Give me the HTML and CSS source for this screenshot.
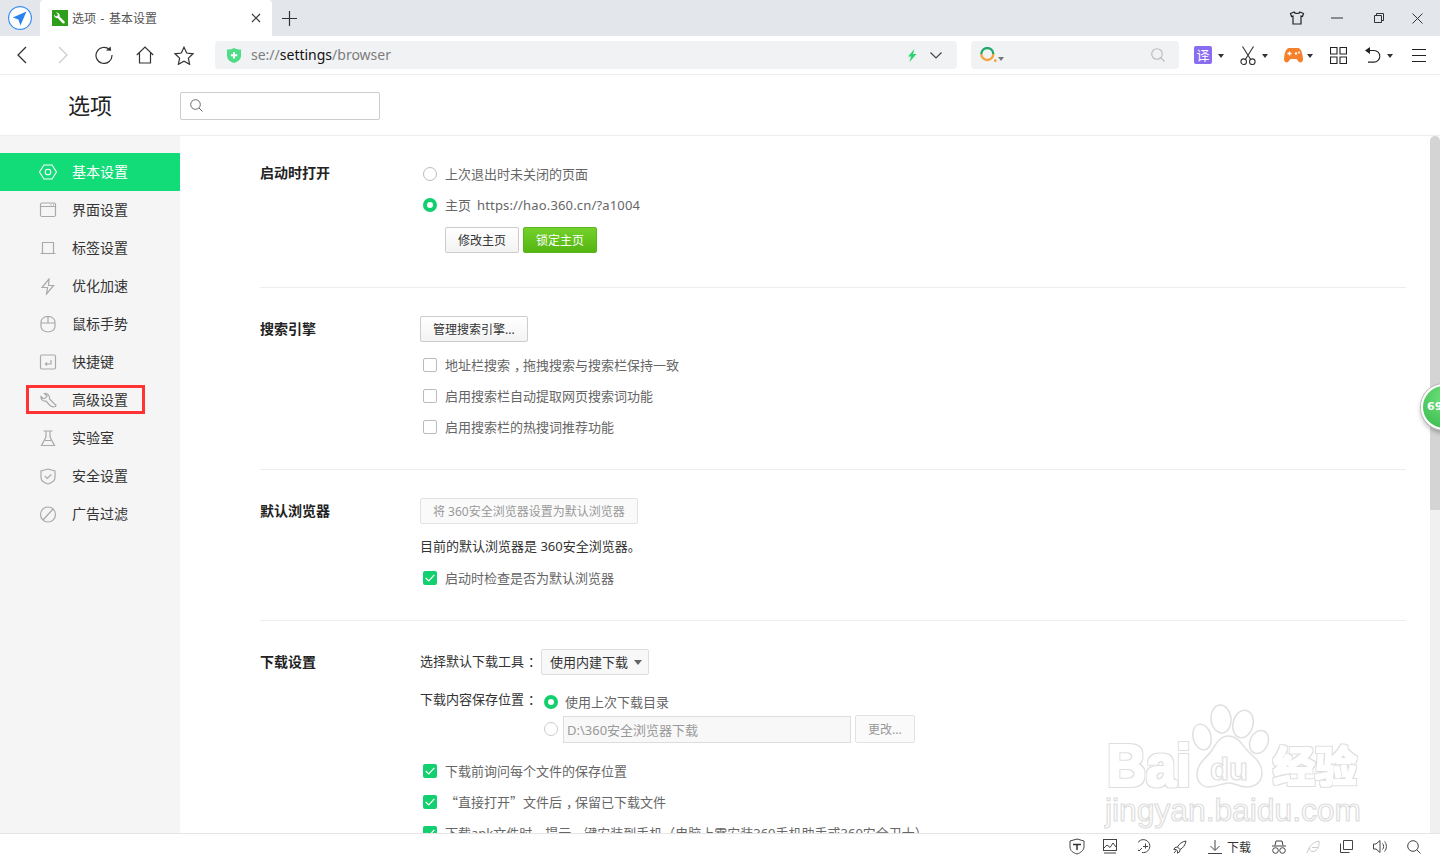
FILE: index.html
```html
<!DOCTYPE html>
<html>
<head>
  <meta charset="utf-8">
  <title>选项 - 基本设置</title>
  <link rel="stylesheet" href="styles.css">
</head>
<body>
  <div class="tabbar">
    <div class="app-logo">
      <svg width="24" height="24" viewBox="0 0 24 24"><circle cx="12" cy="12" r="11.4" fill="#fff" stroke="#3d8ff2" stroke-width="1.2"/><path d="M18.5 5.5L4.8 11.6l5.6 2 2 5.8z" fill="#2c82ee"/></svg>
    </div>
    <div class="tab">
      <svg class="favicon" width="16" height="16" viewBox="0 0 16 16"><rect width="16" height="16" fill="#2f9e1b"/><path d="M4 2.6l2 2-.8 1.4-1.5.4-1.6-1.8c-.3 2.300 1.300 4 3.600 3.500l4.700 5c.6.600 1.500.600 2 .1s.5-1.400-.1-2L7.700 6.800C8.200 4.300 6.300 2.300 4 2.600z" fill="#fff"/></svg>
      <span class="tab-title">选项 - 基本设置</span>
      <svg class="tab-close" width="10" height="10" viewBox="0 0 10 10"><path d="M1 1l8 8M9 1l-8 8" stroke="#333" stroke-width="1.100"/></svg>
    </div>
    <svg class="new-tab" width="15" height="15" viewBox="0 0 15 15"><path d="M7.500 0v15M0 7.500h15" stroke="#333" stroke-width="1.200"/></svg>
    <div class="win-btns">
      <span class="win-btn"><svg width="16" height="16" viewBox="0 0 16 16"><path d="M5 2L1.500 3.500l1 3L4 6v8h8V6l1.500.5 1-3L11 2c-.5 2-5.500 2-6 0z" fill="none" stroke="#222" stroke-width="1.200"/></svg></span>
      <span class="win-btn"><svg width="12" height="2" viewBox="0 0 12 2"><path d="M0 1h12" stroke="#333" stroke-width="1"/></svg></span>
      <span class="win-btn win-restore"><svg width="10" height="10" viewBox="0 0 10 10"><path d="M.5 2.500h7v7h-7zM2.500 2.500v-2h7v7h-2" fill="none" stroke="#333"/></svg></span>
      <span class="win-btn"><svg width="11" height="11" viewBox="0 0 11 11"><path d="M.5.500l10 10M10.500.500l-10 10" stroke="#333" stroke-width="1"/></svg></span>
    </div>
  </div>

  <div class="toolbar">
    <div class="nav-btns">
      <span class="nav-btn"><svg width="10" height="18" viewBox="0 0 10 18"><path d="M9 1L1 9l8 8" fill="none" stroke="#333" stroke-width="1.300"/></svg></span>
      <span class="nav-btn"><svg width="10" height="18" viewBox="0 0 10 18"><path d="M1 1l8 8-8 8" fill="none" stroke="#ccc" stroke-width="1.300"/></svg></span>
      <span class="nav-btn"><svg width="18" height="18" viewBox="0 0 18 18"><path d="M14.500 3.600A8 8 0 1 0 17 9" fill="none" stroke="#333" stroke-width="1.200"/><path d="M11 4.500l5.200.3-.6-4.300z" fill="#333"/></svg></span>
      <span class="nav-btn"><svg width="18" height="18" viewBox="0 0 18 18"><path d="M.8 9L9 1l8.200 8M3.500 7v10h11V7" fill="none" stroke="#333" stroke-width="1.200"/></svg></span>
      <span class="nav-btn nav-star"><svg width="20" height="19" viewBox="0 0 20 19"><path d="M10 1.200l2.700 5.800 6.300.8-4.600 4.300 1.200 6.200-5.600-3.100-5.600 3.100 1.200-6.200L1 7.800 7.300 7z" fill="none" stroke="#333" stroke-width="1.200"/></svg></span>
    </div>
    <div class="address">
      <svg class="addr-shield" width="14" height="15" viewBox="0 0 14 15"><path d="M0 1.500C2.500 1.500 5 1 7 0c2 1 4.500 1.500 7 1.500V8c0 3.500-3.500 6-7 7-3.500-1-7-3.500-7-7z" fill="#4fdc86"/><path d="M7 4v6.500M3.800 7.300h6.400" stroke="#fff" stroke-width="2"/></svg>
      <span class="url"><span class="url-dim">se://</span>settings<span class="url-dim">/browser</span></span>
      <svg class="addr-bolt" width="10" height="13" viewBox="0 0 10 13"><path d="M7.500 0L1 7.500h3L2.500 13 9.500 5h-3.500z" fill="#2bd46f"/></svg>
      <svg class="addr-down" width="12" height="7" viewBox="0 0 12 7"><path d="M.5.500L6 6l5.500-5.500" fill="none" stroke="#444" stroke-width="1.200"/></svg>
    </div>
    <div class="searchbox">
      <svg width="17" height="16" viewBox="0 0 17 16"><path d="M1.300 7a6 6 0 0 1 12 0" fill="none" stroke="#1fa86a" stroke-width="2.300"/><path d="M13.300 7a6 6 0 0 1-12 0" fill="none" stroke="#f2a23a" stroke-width="2.300"/><circle cx="15.300" cy="13.700" r="1.400" fill="#f2a23a"/></svg>
      <span class="caret caret-small"></span>
      <svg class="search-glass" width="14" height="14" viewBox="0 0 14 14"><circle cx="6" cy="6" r="5.300" fill="none" stroke="#bbb" stroke-width="1.100"/><path d="M9.800 9.800L13.500 13.500" stroke="#bbb" stroke-width="1.100"/></svg>
    </div>
    <div class="tools">
      <span class="tool translate">译</span><span class="caret"></span>
      <svg class="tool-icon tool-cut" width="16" height="19" viewBox="0 0 16 19"><path d="M2.500.500l8.500 13.500M13.500.500L5 14" fill="none" stroke="#333" stroke-width="1.100"/><circle cx="3.700" cy="15.700" r="2.800" fill="none" stroke="#333" stroke-width="1.100"/><circle cx="12.300" cy="15.700" r="2.800" fill="none" stroke="#333" stroke-width="1.100"/></svg><span class="caret"></span>
      <svg class="tool-icon tool-game" width="19" height="15" viewBox="0 0 19 15"><path d="M5 0h9c3 0 4.500 5 5 11 .2 3-2.500 4.800-4.500 2.500L12.500 11h-6l-2 2.500C2.500 15.800-.2 14 0 11 .5 5 2 0 5 0z" fill="#f5812c"/><path d="M3.500 5.500h4M5.500 3.500v4" stroke="#fff" stroke-width="1.300"/><circle cx="12" cy="5.500" r="1.200" fill="#fff"/><circle cx="15" cy="4.500" r="1" fill="#fff"/></svg><span class="caret"></span>
      <svg class="tool-icon tool-grid" width="17" height="17" viewBox="0 0 17 17"><path d="M.5.500h6.500V7H.5zM10 .500h6.500V7H10zM.5 10h6.500v6.500H.5zM10 10h6.500v6.500H10z" fill="none" stroke="#222" stroke-width="1.100"/></svg>
      <svg class="tool-icon tool-undo" width="16" height="16" viewBox="0 0 16 16"><path d="M1 3.500h8a5.800 5.800 0 0 1 0 11.600H3" fill="none" stroke="#222" stroke-width="1.100"/><path d="M5 0v7L0 3.500z" fill="#222"/></svg><span class="caret"></span>
      <svg class="tool-icon tool-menu" width="14" height="13" viewBox="0 0 14 13"><path d="M0 .500h14M0 6.500h14M0 12.500h14" stroke="#222" stroke-width="1.100"/></svg>
    </div>
  </div>

  <div class="page-head">
    <div class="page-title">选项</div>
    <div class="page-search">
      <svg width="13" height="13" viewBox="0 0 13 13"><circle cx="5.500" cy="5.500" r="4.800" fill="none" stroke="#666"/><path d="M9 9l3.500 3.500" stroke="#666"/></svg>
    </div>
  </div>

  <div class="body-row">
    <div class="sidebar">
      <div class="side-item active">
        <svg width="20" height="16" viewBox="0 0 20 16"><path d="M6 1h8l4.500 7-4.500 7H6L1.500 8z" fill="none" stroke="#fff" stroke-width="1.100"/><circle cx="10" cy="8" r="2.800" fill="none" stroke="#fff" stroke-width="1.100"/></svg>
        <span>基本设置</span>
      </div>
      <div class="side-item">
        <svg width="20" height="16" viewBox="0 0 20 16"><rect x="2.500" y="1" width="15" height="13.500" rx="1.500" class="ic"/><path d="M2.500 4.500h15M12.500 2.800h1M15 2.800h1" class="ic"/></svg>
        <span>界面设置</span>
      </div>
      <div class="side-item">
        <svg width="20" height="16" viewBox="0 0 20 16"><path d="M4.500 13V2.500h11V13M2.500 13.500h15" class="ic"/></svg>
        <span>标签设置</span>
      </div>
      <div class="side-item">
        <svg width="20" height="17" viewBox="0 0 20 17"><path d="M11 1L4 9.500h5.500L8.500 16 15.500 7.500h-5z" class="ic"/></svg>
        <span>优化加速</span>
      </div>
      <div class="side-item">
        <svg width="20" height="17" viewBox="0 0 20 17"><path d="M3 6a7 5.500 0 0 1 14 0v4.500a7 5.500 0 0 1-14 0zM3 7h14M10 1v6" class="ic"/></svg>
        <span>鼠标手势</span>
      </div>
      <div class="side-item">
        <svg width="20" height="16" viewBox="0 0 20 16"><rect x="2.500" y="1" width="15" height="14" rx="1.500" class="ic"/><path d="M13 6v4H7.500M9 8.500L7.500 10 9 11.500" class="ic"/></svg>
        <span>快捷键</span>
      </div>
      <div class="side-item marked">
        <svg width="20" height="16" viewBox="0 0 20 16"><path d="M6.500 1.500L9 4l-1.500 2L5 6.500 3 4.500C2.500 7.500 5 9.800 8 9l4 4.500c1 1 3.500 1.500 5.500 1L18 13l-1.500-1-5-5c.5-3-2-6-5-5.500z" class="ic"/></svg>
        <span>高级设置</span>
      </div>
      <div class="side-item">
        <svg width="20" height="17" viewBox="0 0 20 17"><path d="M5.500 1h9M8 1v6L3.500 15.500h13L12 7V1M7 10.500h6" class="ic"/></svg>
        <span>实验室</span>
      </div>
      <div class="side-item">
        <svg width="20" height="17" viewBox="0 0 20 17"><path d="M10 1l7 2v6.500c0 3-3.500 5.500-7 6.500-3.500-1-7-3.500-7-6.500V3z" class="ic"/><path d="M6.800 8l2.500 2.500 4-4" class="ic"/></svg>
        <span>安全设置</span>
      </div>
      <div class="side-item">
        <svg width="20" height="17" viewBox="0 0 20 17"><circle cx="10" cy="8.500" r="7.500" class="ic"/><path d="M5 14L15 3" class="ic"/></svg>
        <span>广告过滤</span>
      </div>
    </div>

    <div class="content">
      <div class="section section-first">
        <div class="sec-title sec-title-first">启动时打开</div>
        <div class="sec-body">
          <div class="opt"><span class="radio"></span>上次退出时未关闭的页面</div>
          <div class="opt"><span class="radio on"></span>主页<span class="home-url">https://hao.360.cn/?a1004</span></div>
          <div class="home-btns">
            <span class="btn">修改主页</span>
            <span class="btn btn-green">锁定主页</span>
          </div>
        </div>
      </div>

      <div class="section">
        <div class="sec-title">搜索引擎</div>
        <div class="sec-body">
          <span class="btn">管理搜索引擎...</span>
          <div class="opt first-opt"><span class="check"></span><span>地址栏搜索<span class="pt">，</span>拖拽搜索与搜索栏保持一致</span></div>
          <div class="opt"><span class="check"></span>启用搜索栏自动提取网页搜索词功能</div>
          <div class="opt"><span class="check"></span>启用搜索栏的热搜词推荐功能</div>
        </div>
      </div>

      <div class="section">
        <div class="sec-title">默认浏览器</div>
        <div class="sec-body">
          <span class="btn btn-disabled">将 360安全浏览器设置为默认浏览器</span>
          <div class="note first-opt">目前的默认浏览器是 360安全浏览器。</div>
          <div class="opt"><span class="check on"><svg width="10" height="8" viewBox="0 0 10 8"><path d="M.8 4l3 3L9.300.8" fill="none" stroke="#fff" stroke-width="1.200"/></svg></span>启动时检查是否为默认浏览器</div>
        </div>
      </div>

      <div class="section">
        <div class="sec-title">下载设置</div>
        <div class="sec-body">
          <div class="dl-tool">
            <span class="dl-label">选择默认下载工具<span class="pt">：</span></span>
            <span class="select">使用内建下载<i class="select-arrow"></i></span>
          </div>
          <div class="dl-path">
            <span class="dl-label">下载内容保存位置<span class="pt">：</span></span>
            <div class="dl-choices">
              <div class="dl-line"><span class="radio on"></span><span class="dl-last">使用上次下载目录</span></div>
              <div class="dl-line">
                <span class="radio off"></span>
                <span class="path-input">D:\360安全浏览器下载</span>
                <span class="btn btn-disabled btn-change">更改...</span>
              </div>
            </div>
          </div>
          <div class="opt dl-first"><span class="check on"><svg width="10" height="8" viewBox="0 0 10 8"><path d="M.8 4l3 3L9.300.8" fill="none" stroke="#fff" stroke-width="1.200"/></svg></span>下载前询问每个文件的保存位置</div>
          <div class="opt"><span class="check on"><svg width="10" height="8" viewBox="0 0 10 8"><path d="M.8 4l3 3L9.300.8" fill="none" stroke="#fff" stroke-width="1.200"/></svg></span><span><span class="cjk">“</span>直接打开<span class="cjk">”</span>文件后<span class="pt">，</span>保留已下载文件</span></div>
          <div class="opt"><span class="check on"><svg width="10" height="8" viewBox="0 0 10 8"><path d="M.8 4l3 3L9.300.8" fill="none" stroke="#fff" stroke-width="1.200"/></svg></span><span>下载apk文件时<span class="pt">，</span>提示一键安装到手机（电脑上需安装360手机助手或360安全卫士）</span></div>
        </div>
      </div>
    </div>

    <div class="scrollbar"><div class="thumb"></div></div>
  </div>

  <div class="statusbar">
    <svg class="st-shield" width="16" height="17" viewBox="0 0 16 17"><path d="M8 1l7 2v6c0 3-3.500 6-7 7-3.500-1-7-3-7-7V3z" class="st"/><path d="M4 6.500h8M8 6.500V12" stroke="#333" stroke-width="1.500"/></svg>
    <svg width="14" height="15" viewBox="0 0 14 15"><rect x=".5" y=".5" width="13" height="11" class="st"/><path d="M1 9l3-3 3 2.500L10 4l3 4M1 14h12" class="st"/></svg>
    <svg class="st-clock" width="15" height="15" viewBox="0 0 15 15"><path d="M1 12A6.500 6.500 0 1 1 4 13.500" class="st"/><path d="M7.500 4.500v5M5 7.500h5M1 12l3-3" class="st"/></svg>
    <svg width="14" height="14" viewBox="0 0 14 14"><path d="M13 1C9 1.500 6 4 4.500 7L7 9.500C10 8 12.500 5 13 1zM4.500 7L2 7.500.8 9.500H3.500M7 9.500L6.500 12l-2 1.200V10.500M1 13l2.500-3" class="st"/></svg>
    <span class="st-download">
      <svg width="14" height="14" viewBox="0 0 14 14"><path d="M7 0v10M2.500 6L7 10.500 11.500 6M0 13.500h14" class="st"/></svg>
      <span>下载</span>
    </span>
    <svg width="14" height="14" viewBox="0 0 14 14"><path d="M3 5.500l1-4.500h6l1 4.500M0 6h14" class="st"/><circle cx="3.500" cy="10.500" r="2.800" class="st"/><circle cx="10.500" cy="10.500" r="2.800" class="st"/></svg>
    <svg width="14" height="14" viewBox="0 0 14 14"><path d="M1 13C3 6 7 2 13 1c.5 6-1.500 10-6 10.500-2 .2-3.500-1-3.500-3.500M6 7.500h6" fill="none" stroke="#ccc"/></svg>
    <svg width="13" height="13" viewBox="0 0 13 13"><path d="M3.500.5h9v9h-9zM.5 3.500v9h9" class="st"/></svg>
    <svg width="14" height="13" viewBox="0 0 14 13"><path d="M.5 4v5h2.500L7 12.500V.5L3 4zM9.500 3.500c1.500 1.500 1.500 4.500 0 6M11.500 1.500c2.500 2.500 2.500 7.500 0 10" class="st"/></svg>
    <svg width="14" height="14" viewBox="0 0 14 14"><circle cx="6" cy="6" r="5.300" class="st"/><path d="M9.800 9.800L13.500 13.500" class="st"/></svg>
  </div>

  <!-- sits on top of the page -->
  <div class="speed-ball"><span>69</span></div>

  <svg class="watermark" width="262" height="128" viewBox="0 0 262 128">
    <defs>
      <filter id="wmOutline" x="-5%" y="-5%" width="110%" height="110%">
        <feMorphology in="SourceAlpha" operator="dilate" radius="1.600" result="outer"/>
        <feMorphology in="SourceAlpha" operator="dilate" radius=".6" result="inner"/>
        <feFlood flood-color="#dedede"/>
        <feComposite in2="outer" operator="in" result="edge"/>
        <feFlood flood-color="#fff"/>
        <feComposite in2="inner" operator="in" result="face"/>
        <feMerge>
          <feMergeNode in="edge"/>
          <feMergeNode in="face"/>
        </feMerge>
        <feGaussianBlur stdDeviation=".4"/>
      </filter>
    </defs>
    <g class="wm-shape">
      <ellipse cx="117" cy="15" rx="10" ry="14" transform="rotate(-6 117 15)"/>
      <ellipse cx="139" cy="20" rx="10" ry="14" transform="rotate(14 139 20)"/>
      <ellipse cx="98" cy="33" rx="9" ry="13" transform="rotate(-14 98 33)"/>
      <ellipse cx="155" cy="38" rx="9" ry="12" transform="rotate(24 155 38)"/>
      <path d="M124 32c9 0 13 7 18 13 5 6 16 12 16 24 0 9-7 14-15 14-8 0-12-4-18-4-7 0-12 4-20 4-8 0-12-6-12-13 0-11 10-16 15-24 4-6 8-14 16-14z"/>
    </g>
    <g filter="url(#wmOutline)">
      <text x="3" y="82" class="wm-text wm-bai" textLength="84" lengthAdjust="spacingAndGlyphs">Bai</text>
      <text x="169" y="78" class="wm-text wm-cn">经验</text>
    </g>
    <text x="106" y="76" class="wm-text wm-thin wm-du" textLength="38" lengthAdjust="spacingAndGlyphs">du</text>
    <text x="1" y="117" class="wm-text wm-thin wm-site" textLength="256" lengthAdjust="spacingAndGlyphs">jingyan.baidu.com</text>
  </svg>
</body>
</html>
```

FILE: styles.css
```css
html, body {
  margin: 0;
  padding: 0;
  height: 100%;
  overflow: hidden;
}
body {
  display: flex;
  flex-direction: column;
  background: #fff;
  color: #333;
  font-family: "Noto Sans", "Noto Sans CJK SC", sans-serif;
  font-size: 13px;
}
svg { display: block; flex: none; }

/* tab strip */
.tabbar {
  height: 36px;
  flex: none;
  display: flex;
  align-items: center;
  background: #e3e6ea;
}
.app-logo {
  width: 40px;
  height: 36px;
  display: flex;
  align-items: center;
  justify-content: center;
  box-sizing: border-box;
  padding-bottom: 1px;
}
.tab {
  width: 232px;
  height: 36px;
  display: flex;
  align-items: center;
  box-sizing: border-box;
  padding: 0 11px 0 12px;
  background: #fff;
  border-radius: 4px 4px 0 0;
}
.tab-title {
  margin-left: 4px;
  font-size: 12px;
  word-spacing: 1.500px;
  color: #555;
  flex: 1;
}
.new-tab { margin-left: 10px; }
.win-btns {
  margin-left: auto;
  padding-right: 3px;
  display: flex;
}
.win-btn {
  width: 40px;
  height: 36px;
  display: flex;
  align-items: center;
  justify-content: center;
}
.win-restore svg { margin-left: 4px; }

/* address row */
.toolbar {
  height: 38px;
  flex: none;
  display: flex;
  align-items: center;
  border-bottom: 1px solid #eee;
}
.nav-btns {
  display: flex;
  padding-left: 1px;
  width: 215px;
  box-sizing: border-box;
}
.nav-btn {
  width: 41px;
  height: 28px;
  display: flex;
  align-items: center;
  justify-content: center;
}
.nav-star svg { margin-right: 3px; }
.address {
  width: 742px;
  height: 28px;
  display: flex;
  align-items: center;
  box-sizing: border-box;
  padding: 0 15px 0 12px;
  background: #f0f2f4;
  border-radius: 4px;
}
.url {
  margin: -2px 0 0 10px;
  font-size: 14px;
  color: #111;
  flex: 1;
}
.url-dim { color: #7d7d7d; }
.addr-bolt { margin-right: 13px; }
.searchbox {
  width: 208px;
  height: 28px;
  margin-left: 14px;
  display: flex;
  align-items: center;
  box-sizing: border-box;
  padding: 0 14px 0 9px;
  background: #f0f2f4;
  border-radius: 4px;
}
.search-glass { margin-left: auto; }
.caret {
  width: 0;
  height: 0;
  flex: none;
  border-left: 3px solid transparent;
  border-right: 3px solid transparent;
  border-top: 4px solid #333;
  margin: 2px 0 0 6px;
}
.caret-small {
  border-top-color: #777;
  margin: 8px 0 0 1px;
}
.tools {
  display: flex;
  align-items: center;
  margin-left: 15px;
}
.translate {
  width: 18px;
  height: 18px;
  line-height: 18px;
  text-align: center;
  font-size: 13px;
  color: #fff;
  background: #8a6cf0;
  border-radius: 2px;
}
.tool-cut { margin-left: 16px; }
.tool-game { margin-left: 16px; }
.tool-game + .caret { margin-left: 4px; }
.tool-grid { margin-left: 17px; }
.tool-undo { margin-left: 18px; }
.tool-menu { margin-left: 19px; }

/* page header */
.page-head {
  height: 60px;
  flex: none;
  display: flex;
  align-items: center;
  border-bottom: 1px solid #eee;
}
.page-title {
  width: 112px;
  padding-left: 68px;
  font-size: 22px;
  color: #222;
  line-height: 58px;
}
.page-search {
  width: 200px;
  height: 28px;
  margin-top: 1px;
  display: flex;
  align-items: center;
  box-sizing: border-box;
  padding-left: 9px;
  border: 1px solid #ccc;
  border-radius: 2px;
}

/* sidebar + settings */
.body-row {
  flex: 1;
  display: flex;
  min-height: 0;
}
.sidebar {
  width: 180px;
  flex: none;
  box-sizing: border-box;
  padding-top: 17px;
  background: #f5f5f5;
}
.side-item {
  position: relative;
  height: 38px;
  display: flex;
  align-items: center;
  padding-left: 38px;
  color: #333;
}
.side-item span {
  margin: -2px 0 0 14px;
  font-size: 14px;
}
.side-item.active {
  background: #12dc78;
  color: #fff;
}
.side-item.marked::after {
  content: "";
  position: absolute;
  left: 26px;
  top: 4px;
  width: 119px;
  height: 29px;
  box-sizing: border-box;
  border: 3px solid #f33;
}
.ic {
  fill: none;
  stroke: #a9a9a9;
  stroke-width: 1.200;
}
.content {
  flex: 1;
  min-width: 0;
  overflow: hidden;
  box-sizing: border-box;
  padding: 0 24px 0 80px;
}
.section {
  display: flex;
  padding: 28px 0 27px;
  border-bottom: 1px solid #eee;
}
.section-first { padding: 22px 0 34px; }
.section:last-child { border-bottom: 0; }
.sec-title {
  width: 160px;
  flex: none;
  line-height: 26px;
  font-size: 14px;
  font-weight: 700;
  color: #222;
}
.sec-title-first { margin-top: 2px; }
.sec-body { flex: 1; }

.opt {
  height: 31px;
  display: flex;
  align-items: center;
  padding-left: 3px;
  color: #666;
}
.first-opt { margin-top: 7px; }
.note {
  height: 31px;
  line-height: 31px;
  color: #333;
}
/* comma and colon sit in the middle of their cell in the reference */
.pt {
  padding-left: 4px;
  letter-spacing: -4px;
  font-family: "Noto Sans CJK SC", sans-serif;
}
.cjk { font-family: "Noto Sans CJK SC", sans-serif; }
.radio {
  width: 14px;
  height: 14px;
  flex: none;
  box-sizing: border-box;
  margin-right: 8px;
  border: 1px solid #bbb;
  border-radius: 50%;
  background: #fff;
}
.radio.on {
  border: 4px solid #12cf6f;
}
.check {
  width: 14px;
  height: 14px;
  flex: none;
  box-sizing: border-box;
  margin-right: 8px;
  display: flex;
  align-items: center;
  justify-content: center;
  border: 1px solid #bbb;
  border-radius: 2px;
  background: #fff;
}
.check.on {
  border: 0;
  background: #12cf6f;
}
.home-url {
  margin-left: 6px;
  letter-spacing: .16px;
}
.home-btns {
  display: flex;
  gap: 4px;
  margin: 7px 0 0 25px;
}
.btn {
  display: inline-block;
  height: 26px;
  line-height: 26px;
  box-sizing: border-box;
  padding: 0 12px;
  font-size: 12px;
  color: #333;
  border: 1px solid #ccc;
  border-radius: 2px;
  background: linear-gradient(#fff, #f3f3f3);
}
.btn-green {
  color: #fff;
  border-color: #57b51a;
  background: linear-gradient(#74d12b, #55b512);
}
.btn-disabled {
  color: #999;
  border-color: #e2e2e2;
  background: #fafafa;
}

/* download block */
.dl-tool {
  display: flex;
  align-items: center;
  height: 26px;
}
.dl-tool .dl-label { margin-top: -3px; }
.dl-label { width: 121px; flex: none; }
.select {
  width: 108px;
  height: 26px;
  line-height: 26px;
  display: flex;
  align-items: center;
  box-sizing: border-box;
  padding-left: 8px;
  color: #333;
  border: 1px solid #ddd;
  border-radius: 2px;
  background: #f8f8f8;
}
.select-arrow {
  width: 0;
  height: 0;
  margin-left: 6px;
  border-left: 4px solid transparent;
  border-right: 4px solid transparent;
  border-top: 5px solid #666;
}
.dl-path {
  display: flex;
  margin-top: 14px;
}
.dl-path .dl-label { line-height: 20px; }
.dl-choices { margin-left: 3px; }
.dl-line {
  display: flex;
  align-items: center;
  min-height: 26px;
  color: #666;
}
.dl-last { margin-top: -1px; }
.dl-line .radio { margin-right: 7px; }
.dl-line .radio.off {
  margin-right: 5px;
  border-color: #ccc;
}
.path-input {
  width: 288px;
  height: 27px;
  line-height: 26px;
  box-sizing: border-box;
  padding-left: 3px;
  color: #999;
  border: 1px solid #ddd;
  background: #f8f8f8;
}
.btn-change {
  width: 60px;
  height: 28px;
  line-height: 27px;
  margin-left: 4px;
}
.dl-first { margin-top: 12px; }

.scrollbar {
  width: 10px;
  flex: none;
  background: #f0f0f0;
  border-radius: 5px 5px 0 0;
}
.thumb {
  height: 374px;
  background: #d4d4d4;
  border-radius: 5px 5px 0 0;
}

/* bottom strip */
.statusbar {
  height: 25px;
  flex: none;
  display: flex;
  align-items: center;
  justify-content: flex-end;
  gap: 20px;
  padding-right: 19px;
  border-top: 1px solid #e5e5e5;
  background: #fff;
}
.st {
  fill: none;
  stroke: #444;
  stroke-width: 1;
}
.st-shield { margin-right: -2px; }
.st-clock { margin-left: 1px; }
.st-download {
  display: flex;
  align-items: center;
  gap: 5px;
  margin: 0 1px 0 1px;
  font-size: 12px;
}

/* overlays */
.speed-ball {
  position: absolute;
  left: 1421px;
  top: 384px;
  width: 46px;
  height: 46px;
  box-sizing: border-box;
  border: 2px solid #fff;
  border-radius: 50%;
  background: radial-gradient(circle at 50% 30%, #6ee07a, #35b94a);
  box-shadow: 0 0 0 1px #bbb, 0 3px 5px rgba(0, 0, 0, .3);
}
.speed-ball span {
  display: block;
  padding-left: 4px;
  line-height: 42px;
  font-family: "DejaVu Sans", sans-serif;
  font-size: 11px;
  font-weight: 700;
  color: #fff;
}
.watermark {
  position: absolute;
  left: 1104px;
  top: 704px;
}
.wm-shape {
  fill: #fff;
  stroke: #e0e0e0;
  stroke-width: 1.500;
}
.wm-text {
  font-family: "Liberation Sans", sans-serif;
  font-weight: 700;
}
.wm-thin {
  fill: #fff;
  stroke: #dedede;
  stroke-width: 1.200;
}
.wm-bai { font-size: 60px; }
.wm-du { font-size: 32px; }
.wm-cn {
  font-family: "Noto Sans CJK SC", sans-serif;
  font-size: 42px;
}
.wm-site { font-size: 31px; font-weight: 400; }
```
